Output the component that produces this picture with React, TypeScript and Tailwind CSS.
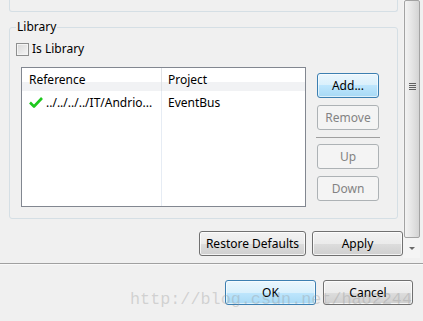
import clsx from "clsx"
import type { ReactNode } from "react"

const font = "font-['Noto_Sans','Liberation_Sans',sans-serif]"

function WinButton({
  children,
  variant = "normal",
  className,
}: {
  children: ReactNode
  variant?: "normal" | "default" | "disabled"
  className?: string
}) {
  return (
    <button
      className={clsx(
        "flex h-[25px] items-center justify-center rounded-[3px] border text-[12px] leading-none",
        variant === "normal" &&
          "border-[#707070] bg-[linear-gradient(#f2f2f2,#ebebeb_50%,#dddddd_50%,#cfcfcf)] text-black shadow-[inset_0_0_0_1px_rgba(255,255,255,0.75)]",
        variant === "default" &&
          "border-[#3c7fb1] bg-[linear-gradient(#eaf6fd,#d9f0fc_50%,#bee6fd_50%,#a7d9f5)] text-black shadow-[inset_0_0_0_1px_rgba(255,255,255,0.6)]",
        variant === "disabled" &&
          "border-[#adb2b5] bg-[#f4f4f4] text-[#838383]",
        className,
      )}
    >
      {children}
    </button>
  )
}

function CheckIcon() {
  return (
    <svg width="14" height="11" viewBox="0 0 14 11" className="shrink-0">
      <path
        d="M1 5.5 L5 9.5 L13 1"
        fill="none"
        stroke="#1ec81e"
        strokeWidth="2.6"
        strokeLinejoin="round"
      />
    </svg>
  )
}

function ReferenceTable() {
  return (
    <div className="flex h-[140px] w-[285px] flex-col border border-[#828790] bg-white">
      <div className="flex h-[23px] shrink-0 bg-[linear-gradient(#ffffff,#ffffff_60%,#f1f2f4_60%,#f1f2f4)]">
        <div className="flex w-[140px] items-center border-r border-[#dfe2e6] pl-[7px]">
          Reference
        </div>
        <div className="flex flex-1 items-center pl-[6px]">Project</div>
      </div>
      <div className="flex flex-1">
        <div className="w-[140px] border-r border-[#e6ecf4]">
          <div className="flex h-[23px] items-center gap-[3px] pl-[7px]">
            <CheckIcon />
            <span>../../../../IT/Andrio...</span>
          </div>
        </div>
        <div className="flex-1">
          <div className="flex h-[23px] items-center pl-[6px]">EventBus</div>
        </div>
      </div>
    </div>
  )
}

function Scrollbar() {
  return (
    <div className="flex h-[258px] w-[17px] flex-col bg-[#f4f4f4]">
      <div className="flex h-[238px] w-[16px] ml-[1px] flex-col items-center rounded-[2px] border border-[#a3a3a3] bg-[linear-gradient(90deg,#f3f3f3,#e6e6e6_45%,#d4d4d4)]">
        <div className="mt-[82px] flex flex-col gap-[1px]">
          <div className="h-[1px] w-[7px] bg-[#606060]" />
          <div className="h-[1px] w-[7px] bg-[#606060]" />
          <div className="h-[1px] w-[7px] bg-[#606060]" />
          <div className="h-[1px] w-[7px] bg-[#606060]" />
        </div>
      </div>
      <div className="flex flex-1 items-center justify-center pl-[1px]">
        <div className="h-0 w-0 border-x-[3px] border-t-[3px] border-x-transparent border-t-[#6a6a6a]" />
      </div>
    </div>
  )
}

export default function App() {
  return (
    <div
      className={clsx(
        "relative h-[321px] w-[423px] overflow-hidden bg-[#f0f0f0] text-[12px] text-black",
        font,
      )}
    >
      <div className="flex h-[263px]">
        <div className="w-[403px] pl-[9px]">
          <div className="h-[12px] w-[389px] rounded-b-[3px] border-x border-b border-[#d5dfe5]" />

          <fieldset className="mt-[7px] w-[389px] rounded-[3px] border border-[#d5dfe5] pb-[11px]">
            <legend className="ml-[6px] px-[1px] leading-[16px]">Library</legend>
            <label className="mt-[6px] ml-[6px] flex h-[16px] items-center gap-[3px]">
              <span className="h-[13px] w-[13px] border border-[#8e8f8f] bg-[linear-gradient(135deg,#d8d8d8,#f6f6f6)] shadow-[inset_0_0_0_1px_#f4f4f4]" />
              <span>Is Library</span>
            </label>
            <div className="mt-[10px] ml-[11px] flex">
              <ReferenceTable />
              <div className="ml-[11px] flex w-[62px] flex-col pt-[6px]">
                <WinButton variant="default">Add...</WinButton>
                <WinButton variant="disabled" className="mt-[7px]">
                  Remove
                </WinButton>
                <div className="-mx-[1px] mt-[7px] h-[1px] bg-[#a0a0a0]" />
                <WinButton variant="disabled" className="mt-[6px]">
                  Up
                </WinButton>
                <WinButton variant="disabled" className="mt-[7px]">
                  Down
                </WinButton>
              </div>
            </div>
          </fieldset>

          <div className="mt-[12px] flex justify-end gap-[6px]">
            <WinButton className="w-[107px]">Restore Defaults</WinButton>
            <WinButton className="w-[91px]">Apply</WinButton>
          </div>
        </div>
        <Scrollbar />
      </div>

      <div className="h-[1px] bg-[#a0a0a0]" />
      <div className="h-[1px] bg-white/60" />

      <div className="flex justify-end gap-[7px] pt-[15px] pr-[10px]">
        <WinButton variant="default" className="w-[91px]">
          OK
        </WinButton>
        <WinButton className="w-[90px]">Cancel</WinButton>
      </div>

      <div className="pointer-events-none absolute top-[290px] left-[130px] font-['Liberation_Mono',monospace] text-[16.8px] leading-[20px] whitespace-nowrap text-[rgba(150,150,150,0.35)]">
        http://blog.csdn.net/hao2244
      </div>
    </div>
  )
}
